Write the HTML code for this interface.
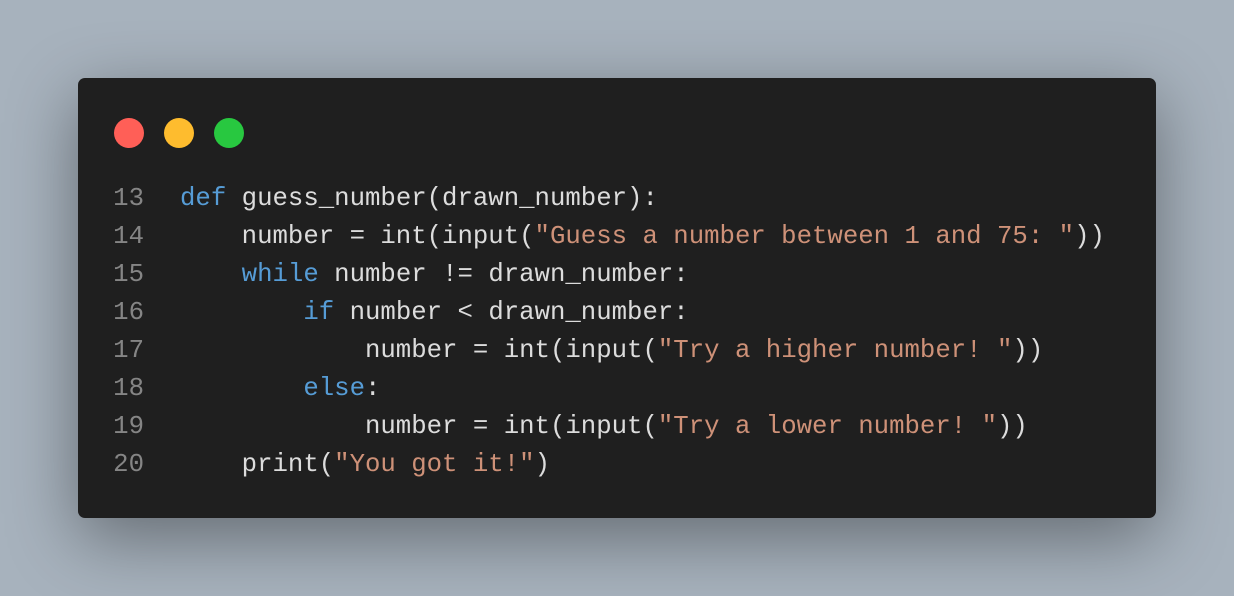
<!DOCTYPE html>
<html><head><style>
html,body{margin:0;padding:0}
body{width:1234px;height:596px;background:#a7b2bd;position:relative;overflow:hidden;font-family:"Liberation Mono",monospace}
.card{position:absolute;left:78px;top:78px;width:1078px;height:440px;background:#1f1f1f;border-radius:7px;box-shadow:0 20px 70px rgba(0,0,0,0.4)}
.dot{position:absolute;top:40px;width:30px;height:30px;border-radius:50%}
.code{position:absolute;left:0;top:102px;font-size:25.7px;line-height:38px;color:#dcdcdc;white-space:pre}
.ln{display:inline-block;width:66px;text-align:right;color:#858585;margin-right:36px}
.k{color:#569cd6}.s{color:#ce9178}
</style></head><body>
<div class="card">
<div class="dot" style="left:36px;background:#ff5f57"></div>
<div class="dot" style="left:86px;background:#febc2e"></div>
<div class="dot" style="left:136px;background:#28c840"></div>
<div class="code"><span class="ln">13</span><span class="k">def</span> guess_number(drawn_number):
<span class="ln">14</span>    number = int(input(<span class="s">"Guess a number between 1 and 75: "</span>))
<span class="ln">15</span>    <span class="k">while</span> number != drawn_number:
<span class="ln">16</span>        <span class="k">if</span> number &lt; drawn_number:
<span class="ln">17</span>            number = int(input(<span class="s">"Try a higher number! "</span>))
<span class="ln">18</span>        <span class="k">else</span>:
<span class="ln">19</span>            number = int(input(<span class="s">"Try a lower number! "</span>))
<span class="ln">20</span>    print(<span class="s">"You got it!"</span>)</div>
</div>
</body></html>
